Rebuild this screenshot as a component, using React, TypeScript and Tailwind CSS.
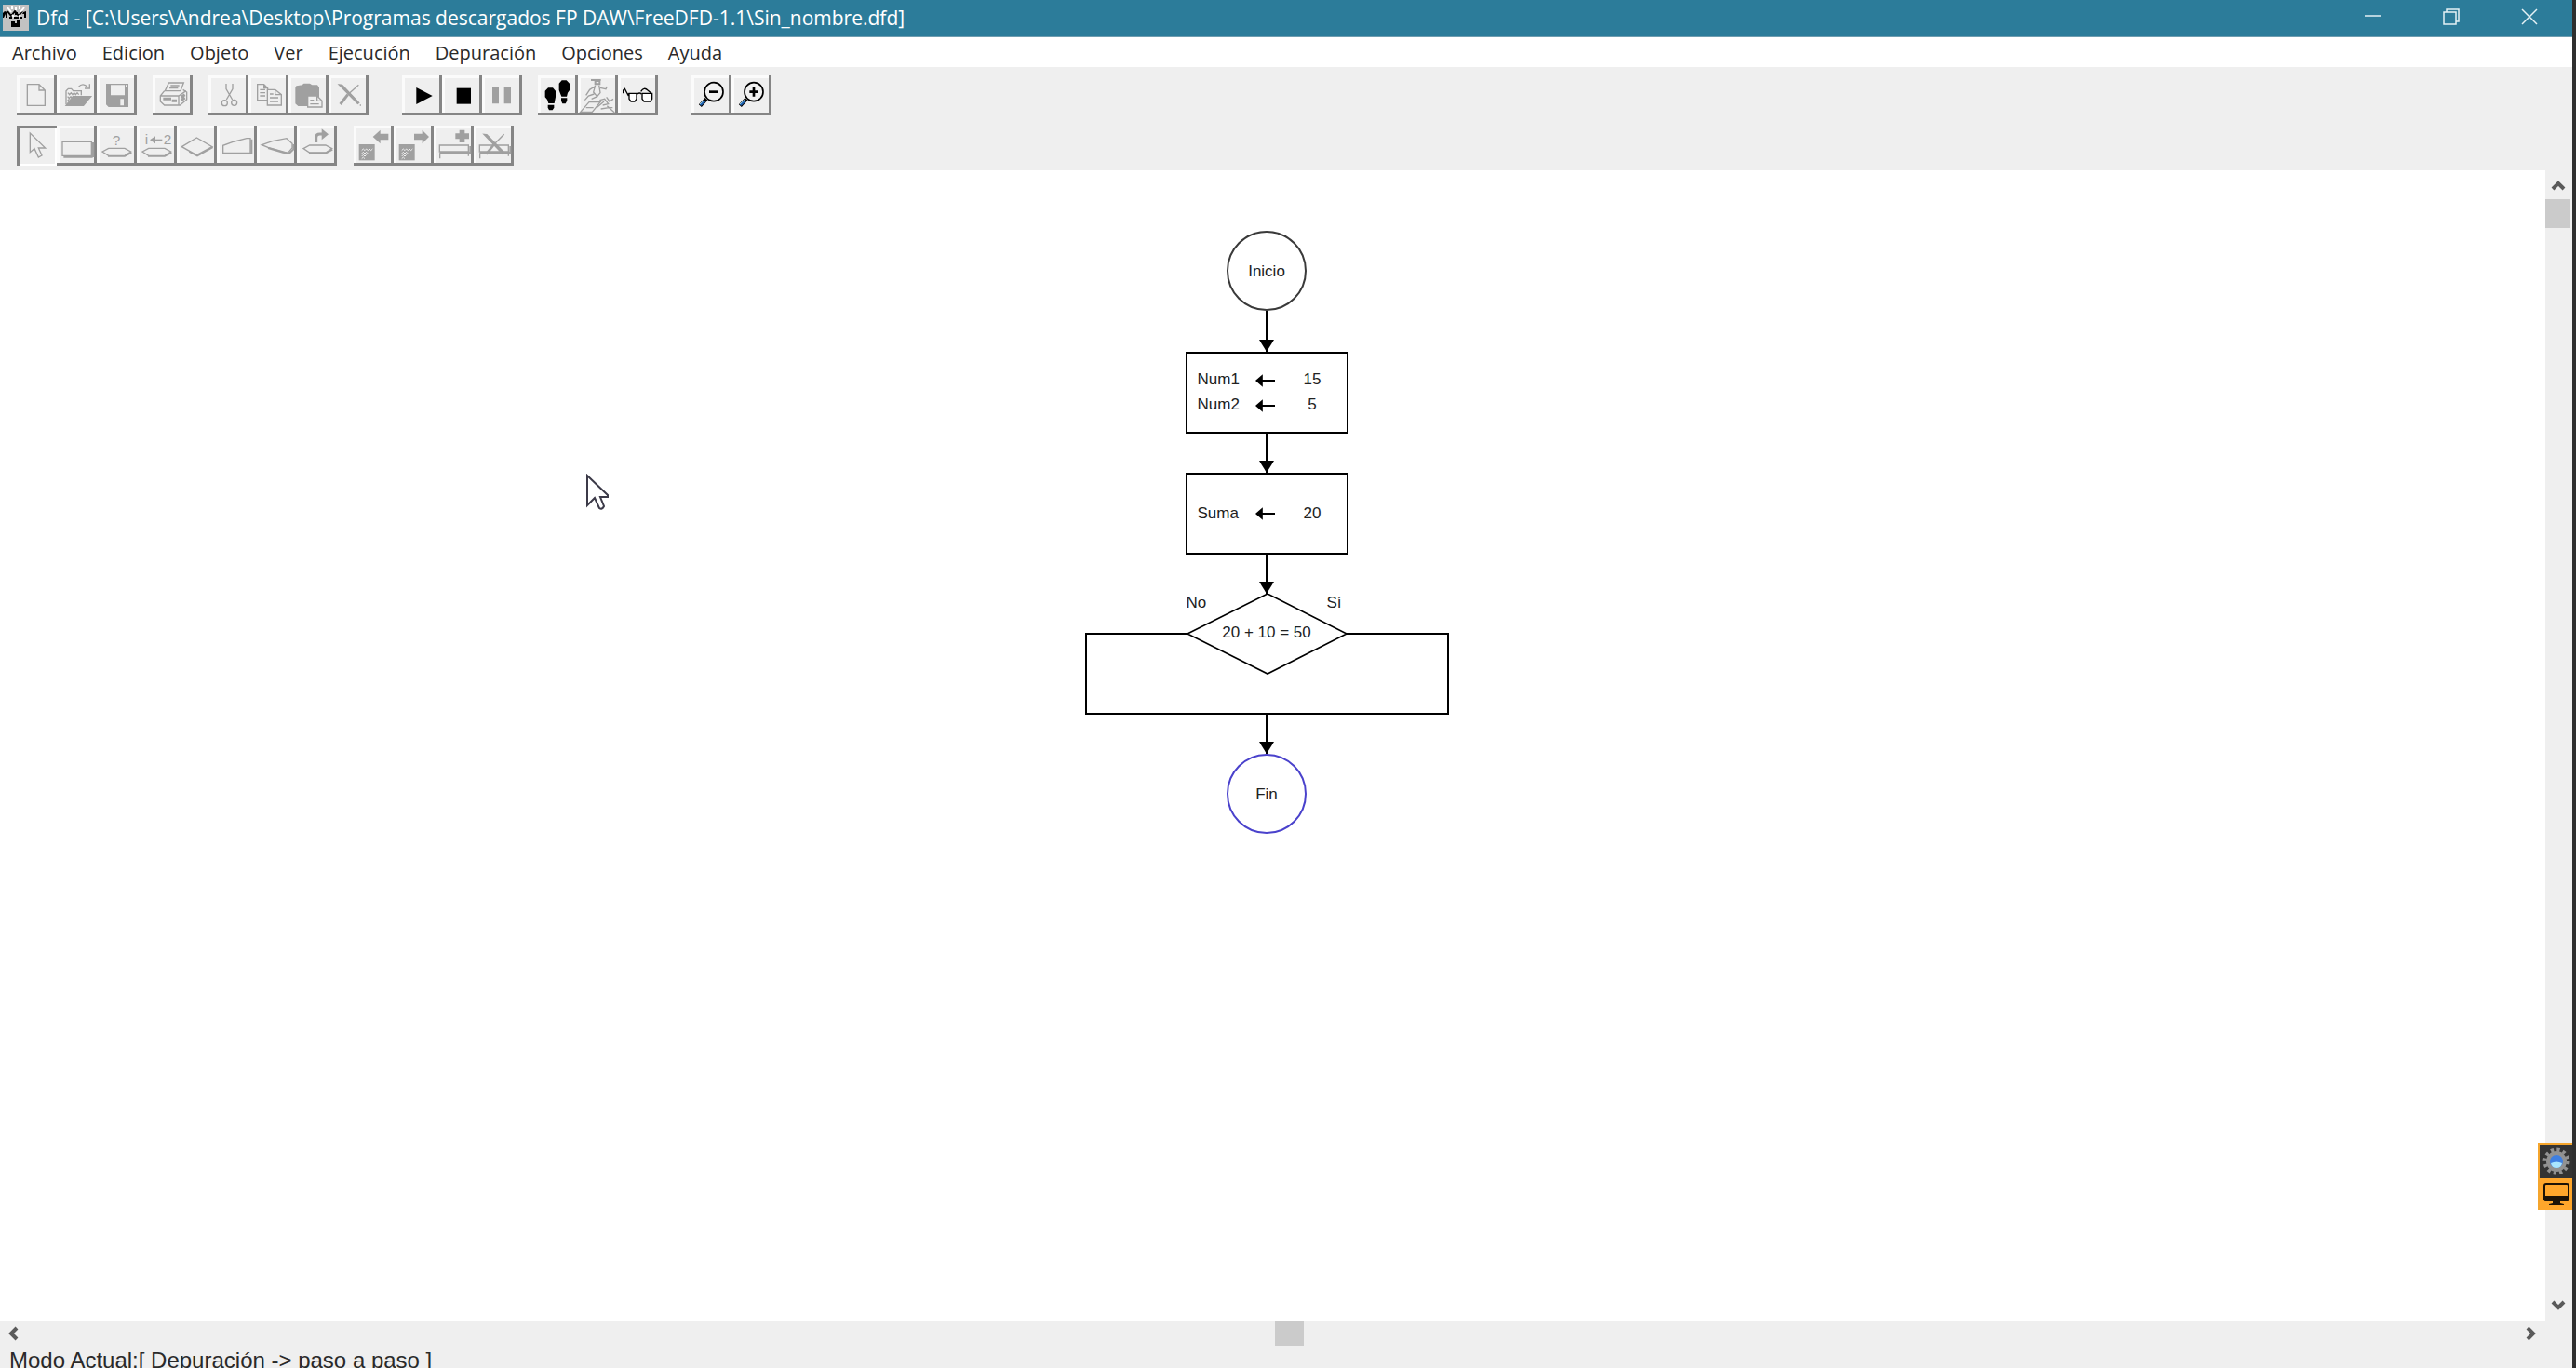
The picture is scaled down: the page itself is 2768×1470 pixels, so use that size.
import React from 'react';

type Tone = 'off' | 'on';
type Tool = { label: string; icon: React.ReactNode; tone?: Tone; pressed?: boolean };

const Pill = ({ x = 0, y = 0 }: { x?: number; y?: number }) => (
  <g transform={`translate(${x} ${y})`}>
    <path d="M18 84 L38 73 H90 L110 84 L90 97 H38 Z" />
    <path d="M36 99 H90 L112 87" strokeWidth="5" />
  </g>
);

const Block = () => (
  <>
    <rect x="17" y="60" width="51" height="52" fill="currentColor" stroke="none" />
    <path d="M26 80 l5 -5 5 5 5 -5 5 5 5 -5 5 5 5 -5 M26 90 l5 -5 5 5 5 -5 5 5 M26 99 l5 -5 5 5 5 -5 M26 107 l5 -5 5 5" stroke="#efefef" strokeWidth="3" />
  </>
);

const fileTools: Tool[] = [
  { label: 'Nuevo', icon: <path d="M34 29 H72 L91 48 V97 H34 Z M72 29 V48 H91" /> },
  {
    label: 'Abrir',
    icon: (
      <>
        <path d="M30 94 V50 L37 43 H47 L53 50 H79 V64" />
        <path d="M36 56 l5 6 5 -6 5 6 5 -6 5 6 5 -6 5 6 M35 68 l5 6 5 -6 5 6 M35 82 l6 -6" />
        <path d="M30 97 L52 68 H110 L86 97 Z" fill="currentColor" />
        <path d="M70 37 Q84 22 100 38 M90 42 H106 V28" />
      </>
    ),
  },
  {
    label: 'Guardar',
    icon: (
      <path
        fillRule="evenodd"
        fill="currentColor"
        stroke="none"
        d="M30 27 H102 V102 H38 L30 94 Z M45 31 H90 V64 H45 Z M76 76 H87 V97 H76 Z M93 31 H98 V36 H93 Z"
      />
    ),
  },
];

const printTools: Tool[] = [
  {
    label: 'Imprimir',
    icon: (
      <>
        <path d="M52 24 H100 L90 50 H40 Z M58 33 H86 M54 41 H82" />
        <path d="M38 50 L25 66 V84 L38 96 H88 L110 78 V54 L98 46 M25 66 H84 L108 50 M84 66 V94" />
        <path d="M34 76 H60 M62 82 H78 M92 70 L104 62 M92 80 L104 72" strokeWidth="9" />
      </>
    ),
  },
];

const editTools: Tool[] = [
  {
    label: 'Cortar',
    icon: (
      <>
        <path d="M57 27 V44 L77 78 M78 27 V44 L58 78" />
        <circle cx="52" cy="89" r="9" />
        <circle cx="83" cy="88" r="9" />
      </>
    ),
  },
  {
    label: 'Copiar',
    icon: (
      <>
        <path d="M29 29 H50 L62 41 V80 H29 Z M50 29 V41 H62 M37 46 H54 M37 56 H54 M37 66 H54" />
        <path d="M61 46 H86 L106 62 V96 H61 Z" fill="#efefef" />
        <path d="M86 46 V62 H106 M69 60 H80 M69 72 H96 M69 84 H96" />
      </>
    ),
  },
  {
    label: 'Pegar',
    icon: (
      <>
        <path d="M26 36 L44 33 L50 28 H68 L76 33 H92 L97 40 V92 L90 97 H32 L24 90 V40 Z" fill="currentColor" />
        <path d="M62 66 H92 L108 82 V102 H62 Z" fill="#efefef" />
        <path d="M92 66 V82 H108 M70 80 H82 M70 92 H98" />
      </>
    ),
  },
  {
    label: 'Eliminar',
    icon: (
      <>
        <path d="M34 30 L44 31 L98 88 L94 91 Z" fill="currentColor" />
        <path d="M97 31 L62 62" />
        <path d="M62 62 L38 93" strokeWidth="9" />
        <path d="M101 96 h4" />
      </>
    ),
  },
];

const runTools: Tool[] = [
  { label: 'Ejecutar', tone: 'on', icon: <path d="M46 39 L98 66 L46 93 Z" fill="currentColor" stroke="none" /> },
  { label: 'Detener', tone: 'on', icon: <path d="M47 41 H93 V92 H47 Z" fill="currentColor" stroke="none" /> },
  { label: 'Pausa', icon: <path d="M33 37 H54 V91 H33 Z M71 37 H93 V91 H71 Z" fill="currentColor" stroke="none" /> },
];

const debugTools: Tool[] = [
  {
    label: 'Paso a paso',
    tone: 'on',
    icon: (
      <g fill="currentColor" stroke="none">
        <path d="M33 40 H48 L57 50 V70 L53 90 H34 L30 78 L23 70 V50 Z" />
        <path d="M32 95 H52 V104 L47 112 H36 L32 104 Z" />
        <path d="M77 16 H92 L102 26 V48 L96 56 L93 68 H76 L68 48 V26 Z" />
        <path d="M75 73 H94 V82 L89 91 H79 L75 82 Z" />
      </g>
    ),
  },
  {
    label: 'Ejecutar hasta',
    icon: (
      <>
        <path d="M42 15 H74 M56 18 H70 V28 H56 Z" strokeWidth="6" />
        <path d="M56 32 L50 54 L62 68 L44 76 M68 32 L72 56 L62 68 M54 36 L38 46 L26 64 M72 40 L90 44 L94 36 M52 60 L34 66 L22 80" />
        <path d="M8 118 L36 86 H72 L46 118 Z M26 104 H50" />
        <path d="M60 104 L84 84 M70 80 L86 76 L98 92 L80 96 M92 70 L102 84 L114 76 M94 98 L118 120 M74 108 L100 104 L112 104" />
      </>
    ),
  },
  {
    label: 'Inspeccionar',
    tone: 'on',
    icon: (
      <>
        <path d="M17 58 V48 L22 43 L34 66 V58 M62 60 Q70 54 76 60 M74 52 Q84 36 96 48 L110 60" />
        <path d="M36 58 H60 V76 L54 84 H42 L36 76 Z M78 58 H110 V76 L104 84 H84 L78 76 Z" fill="#fff" />
      </>
    ),
  },
];

const Lens = ({ plus = false }: { plus?: boolean }) => (
  <>
    <circle cx="72" cy="53" r="30" fill="#f2f2f2" strokeWidth="5" />
    <path d={plus ? 'M58 53 H86 M72 38 V68' : 'M57 53 H87'} strokeWidth="8" />
    <path d="M48 76 L28 98" strokeWidth="12" />
    <path d="M43 82 L29 96" stroke="#1d5fae" strokeWidth="7" />
    <path d="M42 79 L27 93" stroke="#8fd0ee" strokeWidth="3" />
  </>
);

const zoomTools: Tool[] = [
  { label: 'Alejar', tone: 'on', icon: <Lens /> },
  { label: 'Acercar', tone: 'on', icon: <Lens plus /> },
];

const iconText = 'fill-current stroke-none font-[Liberation_Sans,sans-serif]';

const objectTools: Tool[] = [
  { label: 'Cursor', pressed: true, icon: <path d="M43 24 V86 L57 74 L70 102 L81 96 L70 72 H92 Z" /> },
  {
    label: 'Asignación',
    icon: (
      <>
        <path d="M18 52 H112 V97 H18 Z" />
        <path d="M22 100 H116 M117 54 V102" strokeWidth="8" />
      </>
    ),
  },
  {
    label: 'Lectura',
    icon: (
      <>
        <text x="50" y="62" fontSize="46" className={iconText}>?</text>
        <Pill />
      </>
    ),
  },
  {
    label: 'Ciclo para',
    icon: (
      <>
        <text x="26" y="60" fontSize="46" className={iconText}>i</text>
        <text x="86" y="60" fontSize="46" className={iconText}>2</text>
        <path d="M58 46 H82" />
        <path d="M42 46 L60 34 V58 Z" fill="currentColor" stroke="none" />
        <Pill />
      </>
    ),
  },
  {
    label: 'Decisión',
    icon: (
      <>
        <path d="M16 68 L64 39 L114 68 L64 95 Z" />
        <path d="M40 84 L66 98 L116 70" strokeWidth="5" />
      </>
    ),
  },
  {
    label: 'Salida',
    icon: (
      <>
        <path d="M20 88 V64 L50 53 L96 41 H108 V88 Z" />
        <path d="M24 90 H112 V44" strokeWidth="6" />
      </>
    ),
  },
  {
    label: 'Ciclo mientras',
    icon: (
      <>
        <path d="M16 62 L50 50 L96 41 L114 58 V72 L100 88 L36 70 Z" />
        <path d="M36 72 L84 86 L104 90 L118 76 V60" strokeWidth="6" />
      </>
    ),
  },
  {
    label: 'Llamada',
    icon: (
      <>
        <Pill x={3} y={-10} />
        <path d="M62 54 V38 Q62 27 74 27 H84" strokeWidth="9" />
        <path d="M80 10 L102 28 L80 46 Z" fill="currentColor" stroke="none" />
      </>
    ),
  },
];

const subTools: Tool[] = [
  {
    label: 'Subprograma anterior',
    icon: (
      <>
        <Block />
        <path d="M62 36 L86 14 V26 H112 V46 H86 V58 Z" fill="currentColor" stroke="none" />
      </>
    ),
  },
  {
    label: 'Subprograma siguiente',
    icon: (
      <>
        <Block />
        <path d="M114 36 L92 14 V26 H66 V46 H92 V58 Z" fill="currentColor" stroke="none" />
      </>
    ),
  },
  {
    label: 'Nuevo subprograma',
    icon: (
      <>
        <path d="M83 14 H100 V25 H114 V43 H100 V54 H83 V43 H70 V25 H83 Z" fill="currentColor" stroke="none" />
        <path d="M19 63 H112 V84 H19 Z" />
        <path d="M20 87 H118 V66" strokeWidth="6" />
        <path d="M20 88 V106 M112 88 V98" />
      </>
    ),
  },
  {
    label: 'Eliminar subprograma',
    icon: (
      <>
        <path d="M19 63 H112 V84 H19 Z" />
        <path d="M20 87 H118 V66" strokeWidth="6" />
        <path d="M20 88 V106 M112 88 V98" />
        <path d="M33 28 L42 29 L100 88 L94 92 Z" fill="currentColor" />
        <path d="M98 28 L66 60" />
        <path d="M66 60 L40 92" strokeWidth="8" />
      </>
    ),
  },
];

function ToolGroup({ tools }: { tools: Tool[] }) {
  return (
    <div className="flex">
      {tools.map((t) => (
        <button
          key={t.label}
          type="button"
          aria-label={t.label}
          aria-pressed={t.pressed}
          className={
            'h-[43px] w-[43px] ' +
            (t.pressed
              ? 'shadow-[inset_3px_3px_0_#858585,inset_-2px_-2px_0_#fff] '
              : 'shadow-[inset_-3px_-3px_0_#858585,inset_3px_3px_0_#fbfbfb] ') +
            (t.tone === 'on' ? 'text-black' : 'text-[#a0a0a0]')
          }
        >
          <svg viewBox="0 0 129 129" className="h-full w-full" fill="none" stroke="currentColor" strokeWidth="4">
            {t.icon}
          </svg>
        </button>
      ))}
    </div>
  );
}

const menus = ['Archivo', 'Edicion', 'Objeto', 'Ver', 'Ejecución', 'Depuración', 'Opciones', 'Ayuda'];

function DownArrow({ long = false }: { long?: boolean }) {
  return (
    <svg
      viewBox="0 0 18 44"
      preserveAspectRatio="xMidYMax slice"
      className={long ? 'h-11 w-[18px]' : 'h-[42px] w-[18px]'}
    >
      <path d="M9 0 V44" stroke="#000" strokeWidth="2" />
      <path d="M1 31 H17 L9 44 Z" />
    </svg>
  );
}

function Terminal({ text, active = false }: { text: string; active?: boolean }) {
  return (
    <div
      className={
        'flex h-[86px] w-[86px] items-center justify-center rounded-full border-2 pt-px ' +
        (active ? 'border-[#4a42cc]' : 'border-[#3a3a3a]')
      }
    >
      {text}
    </div>
  );
}

function Assign({ rows }: { rows: [string, string][] }) {
  return (
    <div className="flex h-[88px] w-[175px] flex-col justify-center border-2 border-black pr-5 pb-px pl-[11px]">
      {rows.map(([name, value]) => (
        <div key={name} className="flex h-[27px] items-center">
          <span className="w-16">{name}</span>
          <svg viewBox="0 0 22 14" className="mt-px h-[14px] w-[22px]">
            <path d="M4 7 H22" stroke="#000" strokeWidth="2" />
            <path d="M0 7 L8 0 V14 Z" />
          </svg>
          <span className="ml-[23px] w-[34px] text-center">{value}</span>
        </div>
      ))}
    </div>
  );
}

function Decision({ text }: { text: string }) {
  return (
    <div className="relative h-[130px] w-[391px]">
      <svg viewBox="0 0 391 130" className="h-full w-full" fill="none" stroke="#000" strokeWidth="2">
        <path d="M110 43 H1 V129 H390 V43 H281" />
        <path d="M110 43 L196 0 L281 43 L196 86 Z" strokeWidth="1.6" />
      </svg>
      <span className="absolute top-0 left-[109px] leading-5">No</span>
      <span className="absolute top-0 left-[260px] leading-5">Sí</span>
      <span className="absolute inset-x-0 top-8 text-center leading-5">{text}</span>
    </div>
  );
}

function Chevron({ d }: { d: string }) {
  return (
    <svg viewBox="0 0 16 16" className="h-4 w-4" fill="none" stroke="#5a5a5a" strokeWidth="4">
      <path d={d} />
    </svg>
  );
}

export default function App() {
  return (
    <div className="flex h-screen overflow-hidden bg-[#2f2f2f] pr-1">
      <div className="relative flex min-w-0 flex-1 flex-col bg-[#efefef]">
        <header className="flex h-10 shrink-0 items-stretch border-b border-[#6f9db0] bg-[#2c7c9a] text-white">
          <div className="flex flex-1 items-center pb-[2px] pl-[3px]">
            <svg viewBox="0 0 28 28" className="h-7 w-7">
              <rect width="28" height="28" fill="#c2c2c2" />
              <path d="M0 9 L2 7 L5 8 V14 H3 V10 L1 14 H0 Z M22 8 L25 7 V14 H23 V10 H21 Z M9 18 H13 V20 H15 V17 H19 V24 H9 Z M13 8 H16 V11 H13 Z M12 13 H17 V15 H12 Z" fill="#000" />
              <path d="M5 7 L9 12 L13 7 L17 12 L21 7 M7 14 H10 M18 14 H21" fill="none" stroke="#000" strokeWidth="2" />
              <path d="M5 3 L9 8 M10 1 V5 M14 2 V6 M18 1 V5 M23 3 L19 8 M10 11 L12 13 M19 11 L17 13" stroke="#fff" strokeWidth="2" />
            </svg>
            <h1 className="ml-2 font-['Open_Sans',sans-serif] text-[21px] leading-7 whitespace-pre">
              {'Dfd - [C:\\Users\\Andrea\\Desktop\\Programas descargados FP DAW\\FreeDFD-1.1\\Sin_nombre.dfd]'}
            </h1>
          </div>
          <div className="flex pr-1">
            {[
              ['Minimizar', 'M0 8 H18'],
              ['Restaurar', 'M1 4 H14 V17 H1 Z M4 4 V1 H17 V14 H14'],
              ['Cerrar', 'M1 1 L17 17 M17 1 L1 17'],
            ].map(([label, d]) => (
              <button key={label} type="button" aria-label={label} className="flex w-[84px] items-center justify-center pb-[3px]">
                <svg viewBox="0 0 18 18" className="h-[18px] w-[18px]" fill="none" stroke="#e4f1f5" strokeWidth="1.5">
                  <path d={d} />
                </svg>
              </button>
            ))}
          </div>
        </header>

        <nav className="flex h-8 shrink-0 items-center gap-px bg-white">
          {menus.map((m) => (
            <button key={m} type="button" className="px-[13px] pt-[2px] font-['Open_Sans',sans-serif] text-[20px] leading-7 text-[#2a2a2a]">
              {m}
            </button>
          ))}
        </nav>

        <div className="flex h-[111px] shrink-0 flex-col gap-[11px] pt-[9px] pl-[18px]">
          <div className="flex gap-9">
            <div className="flex gap-[17px]">
              <ToolGroup tools={fileTools} />
              <ToolGroup tools={printTools} />
              <ToolGroup tools={editTools} />
            </div>
            <div className="flex gap-[17px]">
              <ToolGroup tools={runTools} />
              <ToolGroup tools={debugTools} />
            </div>
            <ToolGroup tools={zoomTools} />
          </div>
          <div className="flex gap-[18px]">
            <ToolGroup tools={objectTools} />
            <ToolGroup tools={subTools} />
          </div>
        </div>

        <div className="flex min-h-0 flex-1">
          <main className="relative flex flex-1 flex-col items-center bg-white pt-[65px] pr-[13px] font-['Liberation_Sans',sans-serif] text-[17px] leading-5 text-[#222]">
            <Terminal text="Inicio" />
            <DownArrow long />
            <Assign rows={[['Num1', '15'], ['Num2', '5']]} />
            <DownArrow />
            <Assign rows={[['Suma', '20']]} />
            <DownArrow />
            <Decision text="20 + 10 = 50" />
            <DownArrow />
            <Terminal text="Fin" active />
            <svg viewBox="0 0 26 40" className="absolute top-[326px] left-[630px] h-10 w-[26px]">
              <path d="M1 2 V34 L9 26 L14 37 Q17 39 19 35 L15 25 H23 V23 Z" fill="#fff" stroke="#3c3a48" strokeWidth="2" />
            </svg>
          </main>
          <div className="flex w-[29px] shrink-0 flex-col pr-[2px]">
            <button type="button" aria-label="Subir" className="flex h-[31px] items-center justify-center">
              <Chevron d="M2 12 L8 6 L14 12" />
            </button>
            <div className="h-[31px] bg-[#cbcbcb]" />
            <div className="flex-1" />
            <button type="button" aria-label="Bajar" className="flex h-[31px] items-center justify-center pb-[2px]">
              <Chevron d="M2 4 L8 10 L14 4" />
            </button>
          </div>
        </div>

        <div className="mr-[30px] flex h-[27px] shrink-0">
          <button type="button" aria-label="Izquierda" className="flex w-[30px] items-center justify-center">
            <Chevron d="M11 2 L5 8 L11 14" />
          </button>
          <div className="grow-[1340]" />
          <div className="w-[31px] bg-[#cbcbcb]" />
          <div className="grow-[1304]" />
          <button type="button" aria-label="Derecha" className="flex w-[30px] items-center justify-center">
            <Chevron d="M5 2 L11 8 L5 14" />
          </button>
        </div>
        <footer className="h-6 shrink-0 overflow-hidden pt-[2px] pl-[10px] font-['Liberation_Sans',sans-serif] text-[24px] leading-7 text-[#2a2a2a]">
          {'Modo Actual:[ Depuración -> paso a paso ]'}
        </footer>

        <aside className="absolute right-0 bottom-[170px] w-[37px] border-t-2 border-l-2 border-[#f5a52c]">
          <button type="button" aria-label="Ajustes" className="flex h-9 w-full items-center justify-center bg-[#333]">
            <svg viewBox="0 0 30 30" className="h-[30px] w-[30px]">
              <circle cx="15" cy="15" r="12.5" fill="none" stroke="#929292" strokeWidth="4" strokeDasharray="3.3 3.24" />
              <circle cx="15" cy="15" r="9" fill="#3f7fe0" stroke="#929292" strokeWidth="4" />
              <path d="M9 17 Q15 14 21 17 Q20 22 15 22 Q10 22 9 17Z" fill="#a9e6ff" />
            </svg>
          </button>
          <button type="button" aria-label="Pantalla" className="flex h-[34px] w-full items-center justify-center bg-[#ffa62b]">
            <svg viewBox="0 0 30 26" className="h-[26px] w-[30px]">
              <rect x="2" y="2" width="26" height="18" rx="2" fill="none" stroke="#1c1206" strokeWidth="2" />
              <path d="M1 15 H29 V19 L27 21 H19 V23 L23 24 V25 H7 V24 L11 23 V21 H3 L1 19 Z" fill="#1c1206" />
            </svg>
          </button>
        </aside>
      </div>
    </div>
  );
}
